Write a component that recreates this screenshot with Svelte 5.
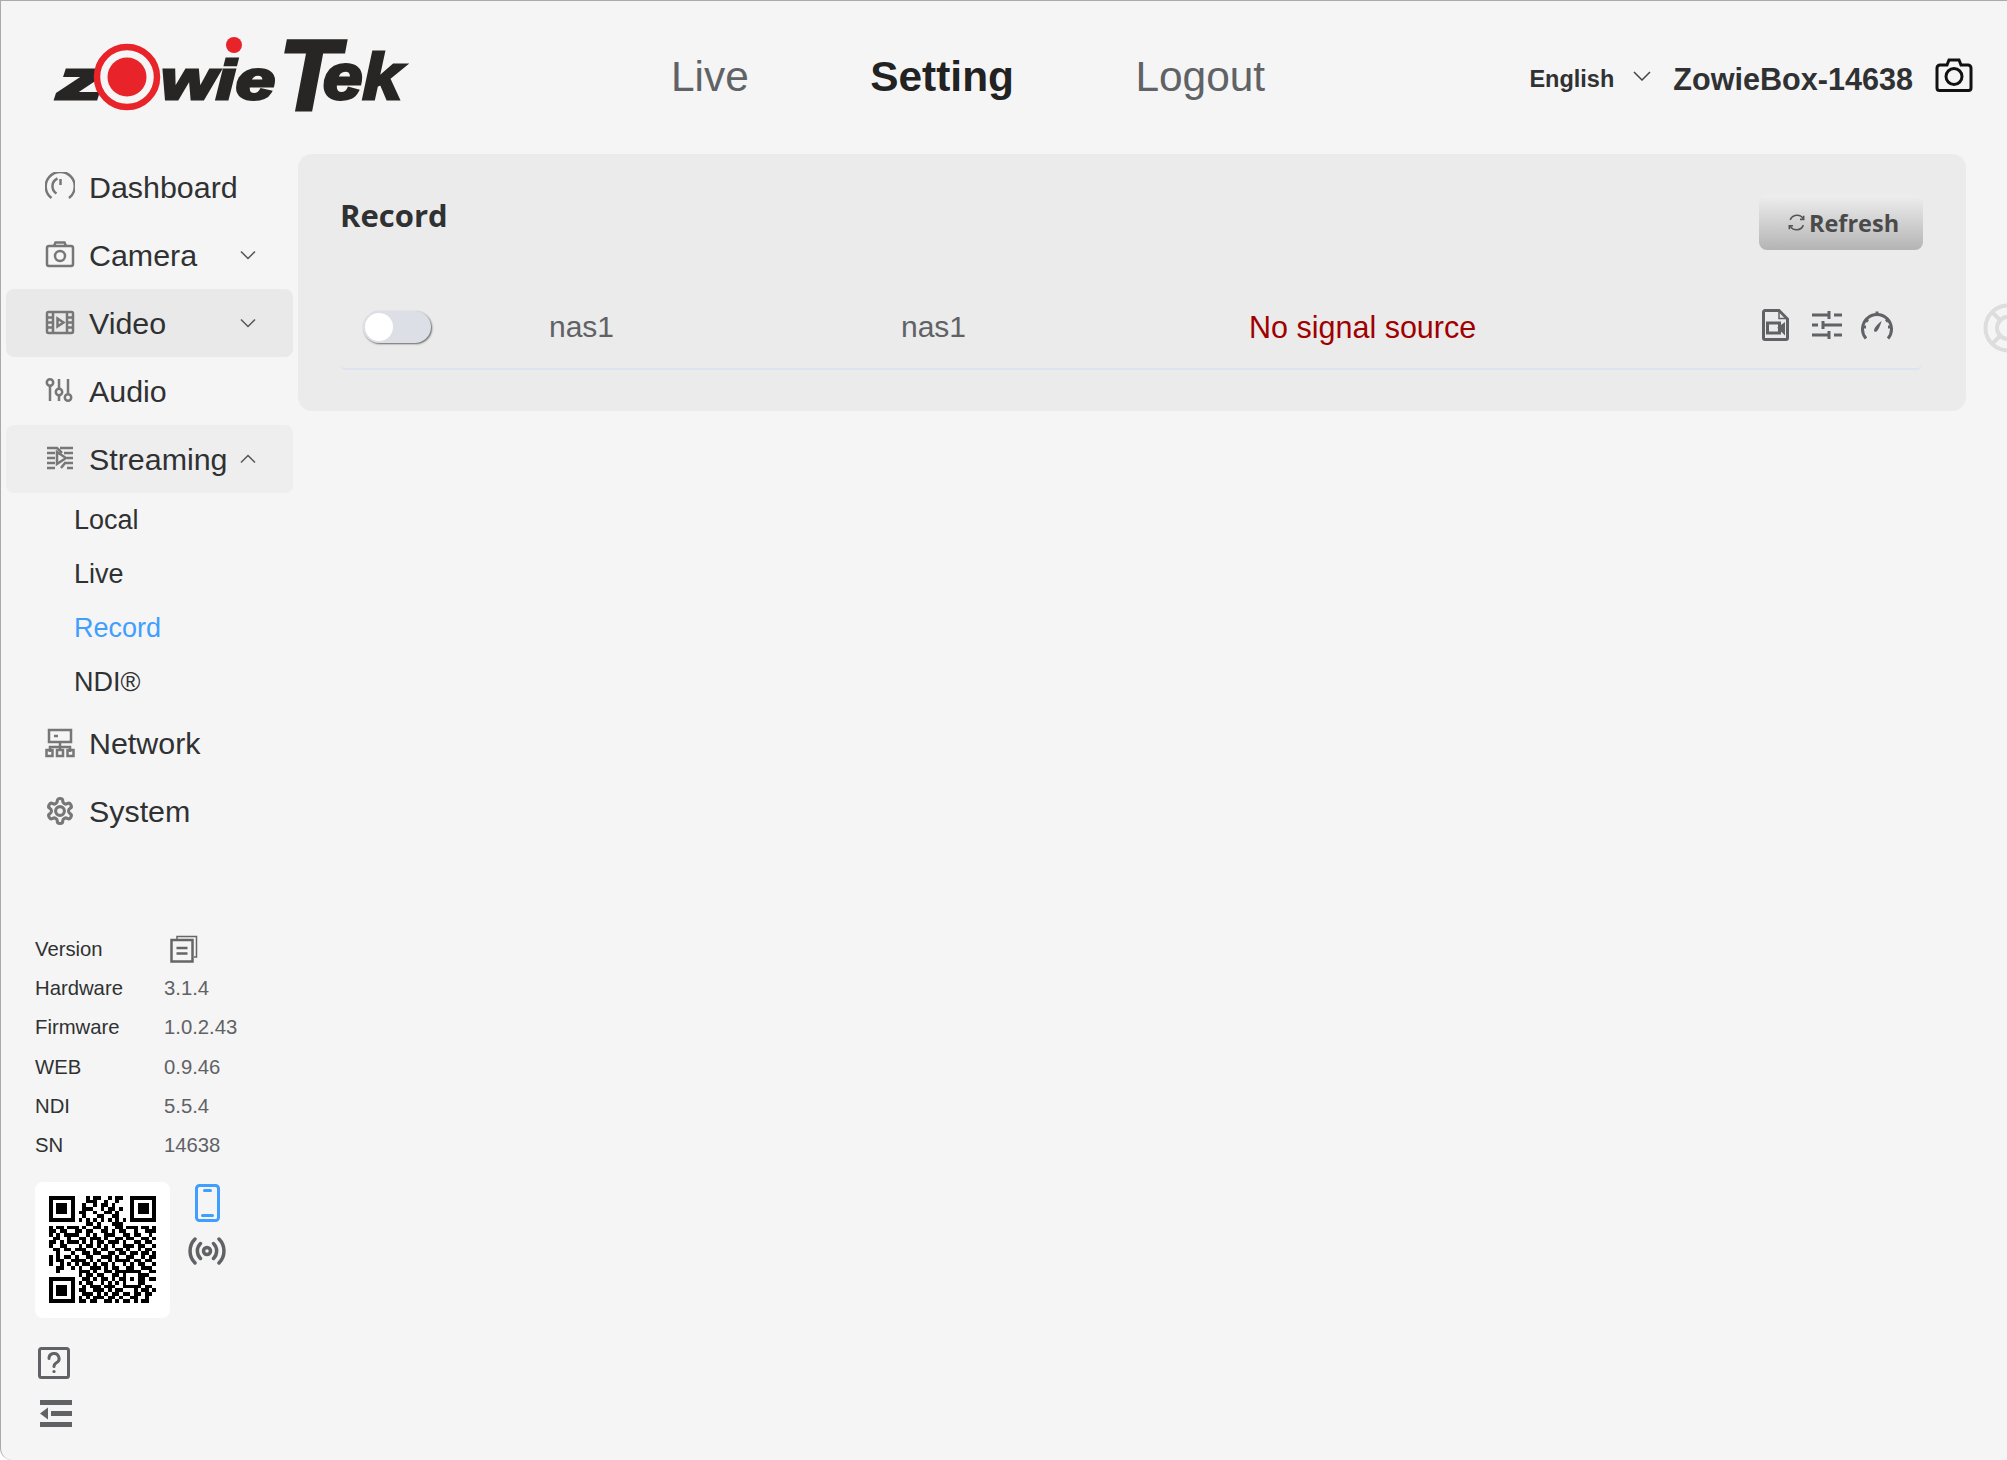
<script>
  const icons = {
    dashboard: '<path d="M6.500 26A14.500 14.500 0 1 1 24 26"/><path d="M11.500 21.500A8.500 8.500 0 0 1 12.500 6.500"/><path d="M15.500 7v6"/>',
    camera: '<rect x="2" y="6" width="26" height="20" rx="2"/><path d="M9 6l1.500-3.500h9L21 6"/><circle cx="15" cy="16" r="5"/>',
    video: '<rect x="2" y="4" width="26" height="21" rx="1.500"/><path d="M8 4v21M22 4v21M2 9.500h6M2 14.500h6M2 19.500h6M22 9.500h6M22 14.500h6M22 19.500h6"/><path d="M12.500 10.500v8l6-4z"/>',
    audio: '<path d="M5 10v15M14 3v9M14 20v5M23 3v14"/><circle cx="5" cy="6.500" r="3.200"/><circle cx="14" cy="16" r="3.200"/><circle cx="23" cy="21.500" r="3.200"/>',
    streaming: '<path d="M2 4h10l5 5M15 4h13M2 9h8M19 9h9M2 14h8M22 14h6M2 19h8M19 19h9M2 24h8M16 24l4-5M22 24h6"/><path d="M12 8v12l9-6z"/>',
    network: '<rect x="4" y="2" width="22" height="12"/><path d="M9 8h4M15 14v5M5 24v-5h20v5M15 19v3"/><rect x="1.500" y="22" width="6" height="6"/><rect x="12" y="22" width="6" height="6"/><rect x="22.500" y="22" width="6" height="6"/>',
    system: '<g transform="scale(1.25)"><path d="M12.220 2h-.44a2 2 0 0 0-2 2v.18a2 2 0 0 1-1 1.730l-.43.25a2 2 0 0 1-2 0l-.15-.08a2 2 0 0 0-2.730.73l-.22.38a2 2 0 0 0 .73 2.730l.15.1a2 2 0 0 1 1 1.720v.51a2 2 0 0 1-1 1.740l-.15.09a2 2 0 0 0-.73 2.730l.22.38a2 2 0 0 0 2.730.73l.15-.08a2 2 0 0 1 2 0l.43.25a2 2 0 0 1 1 1.730V20a2 2 0 0 0 2 2h.44a2 2 0 0 0 2-2v-.18a2 2 0 0 1 1-1.730l.43-.25a2 2 0 0 1 2 0l.15.08a2 2 0 0 0 2.730-.73l.22-.39a2 2 0 0 0-.73-2.730l-.15-.08a2 2 0 0 1-1-1.740v-.5a2 2 0 0 1 1-1.740l.15-.09a2 2 0 0 0 .73-2.730l-.22-.38a2 2 0 0 0-2.730-.73l-.15.08a2 2 0 0 1-2 0l-.43-.25a2 2 0 0 1-1-1.730V4a2 2 0 0 0-2-2z"/><circle cx="12" cy="12" r="3.500"/></g>'
  };

  const menu = [
    { name: 'Dashboard', icon: 'dashboard' },
    { name: 'Camera', icon: 'camera', caret: 'down' },
    { name: 'Video', icon: 'video', caret: 'down', cls: 'hover' },
    { name: 'Audio', icon: 'audio' },
    { name: 'Streaming', icon: 'streaming', caret: 'up', cls: 'open', children: ['Local', 'Live', 'Record', 'NDI®'] },
    { name: 'Network', icon: 'network' },
    { name: 'System', icon: 'system' }
  ];

  const versions = [
    ['Hardware', '3.1.4'],
    ['Firmware', '1.0.2.43'],
    ['WEB', '0.9.46'],
    ['NDI', '5.5.4'],
    ['SN', '14638']
  ];

  // read off the screenshot, module by module
  const qr = [
    '11111110001011001011001111111',
    '10000010001110010010001000001',
    '10111010010010110100001011101',
    '10111010011100101101001011101',
    '10111010110010011010001011101',
    '10000010010001100110001000001',
    '11111110101010101010101111111',
    '00000000001101000111000000000',
    '10110111010011010011011101101',
    '11011001101100110101100100111',
    '10101111001010011100110110010',
    '01100100110111010011011001101',
    '11010111010101101110100110110',
    '10011000101101010100111011001',
    '01101101110010110011010010110',
    '00100010011011001101101101101',
    '10101101001100111010011001011',
    '10110011110101001011110110110',
    '10010101011010110100101011001',
    '00110010100111010110011001110',
    '00100000111010011011111110011',
    '00000000101101100110100011100',
    '11111110011010110101101011011',
    '10000010101100101010100011000',
    '10111010010111011100111110110',
    '10111010110011101011000101101',
    '10111010011101010110110110110',
    '10000010101011101101001100100',
    '11111110110110011010110101100'
  ];
</script>

{#snippet caret(dir)}
  <svg class="caret" viewBox="0 0 16 10"><path d={dir === 'up' ? 'M1 8.500l7-7 7 7' : 'M1 1.500l7 7 7-7'} /></svg>
{/snippet}

<div class="app">
  <header class="top">
    <div class="logo">
      <svg viewBox="0 0 380 90" width="380" height="90">
        <g class="logo-text">
          <text x="4" y="62" font-size="56" textLength="46" lengthAdjust="spacingAndGlyphs">z</text>
          <text x="108" y="62" font-size="56" textLength="114" lengthAdjust="spacingAndGlyphs">wie</text>
          <text x="226" y="73" font-size="100" textLength="60" lengthAdjust="spacingAndGlyphs">T</text>
          <text x="270" y="62" font-size="64" textLength="79" lengthAdjust="spacingAndGlyphs">ek</text>
        </g>
        <circle cx="74" cy="40" r="30" fill="#f5f5f5" stroke="#e8232a" stroke-width="6.500" />
        <circle cx="74" cy="40" r="19.500" fill="#e8232a" />
        <circle cx="181" cy="8" r="8" fill="#e8232a" />
      </svg>
    </div>
    <nav class="nav">
      <span>Live</span>
      <span class="active">Setting</span>
      <span>Logout</span>
    </nav>
    <div class="device">
      <span class="lang">English</span>
      <svg class="lang-caret" viewBox="0 0 18 10"><path d="M1 1l8 8 8-8" /></svg>
      <span class="box-name">ZowieBox-14638</span>
      <svg class="snap" viewBox="0 0 38 34">
        <path d="M5 7h7l2-5h10l2 5h7a3 3 0 0 1 3 3v20a2.500 2.500 0 0 1-2.500 2.500h-29A2.500 2.500 0 0 1 2 30V10a3 3 0 0 1 3-3z" />
        <circle cx="19" cy="18.500" r="8" />
      </svg>
    </div>
  </header>

  <div class="body">
    <aside class="side">
      <ul class="menu">
        {#each menu as item}
          <li class="item {item.cls ?? ''}">
            <svg class="ico" viewBox="0 0 30 30">{@html icons[item.icon]}</svg>
            <span class="label">{item.name}</span>
            {#if item.caret}{@render caret(item.caret)}{/if}
          </li>
          {#if item.children}
            {#each item.children as child}
              <li class="sub" class:current={child === 'Record'}>{child}</li>
            {/each}
          {/if}
        {/each}
      </ul>

      <div class="versions">
        <div class="vrow first">
          <span class="vkey">Version</span>
          <svg class="copy" viewBox="0 0 28 28">
            <path d="M7 4V1.500h19.500V22H24" class="thin" />
            <rect x="1.500" y="5" width="21" height="21.500" />
            <path d="M6.500 13h11M6.500 18.500h11" />
          </svg>
        </div>
        {#each versions as [k, v]}
          <div class="vrow"><span class="vkey">{k}</span><span class="vval">{v}</span></div>
        {/each}
      </div>

      <div class="share">
        <div class="qr">
          <svg viewBox="0 0 29 29" width="107" height="107" shape-rendering="crispEdges">
            {#each qr as row, y}
              {#each row as cell, x}
                {#if cell === '1'}<rect {x} {y} width="1" height="1" fill="#000" />{/if}
              {/each}
            {/each}
          </svg>
        </div>
        <div class="share-btns">
          <svg class="phone" viewBox="0 0 25 38">
            <rect x="1.500" y="1.500" width="22" height="35" rx="3" />
            <path d="M9.500 6.500h6M7.500 31.500h10" />
          </svg>
          <svg class="cast" viewBox="0 0 38 28">
            <circle cx="19" cy="14" r="3.500" />
            <path d="M12.500 6.500a10.500 10.500 0 0 0 0 15M25.500 6.500a10.500 10.500 0 0 1 0 15M7 2a17 17 0 0 0 0 24M31 2a17 17 0 0 1 0 24" />
          </svg>
        </div>
      </div>

      <svg class="help" viewBox="0 0 32 32">
        <rect x="1.500" y="1.500" width="29" height="29" rx="2" />
        <path d="M11 11.500a5 5 0 1 1 7.500 4.300c-1.700 1-2.500 1.700-2.500 3.700" />
        <circle class="dot" cx="16" cy="24.500" r="1.600" />
      </svg>
      <svg class="fold" viewBox="0 0 32 27">
        <rect y="0" width="32" height="5" />
        <rect x="11" y="11" width="21" height="5" />
        <path d="M0 13.500l8-6v12z" />
        <rect y="22" width="32" height="5" />
      </svg>
    </aside>

    <main class="main">
      <section class="panel">
        <div class="panel-head">
          <h2>Record</h2>
          <button class="refresh">
            <svg viewBox="0 0 18 18"><path d="M3 6.500A7 7 0 0 1 15.500 5.500M15.500 11.500A7 7 0 0 1 3 12.500" /><path d="M15.800 2.500v3.500h-3.500M2.200 15.500V12h3.500" /></svg>
            Refresh
          </button>
        </div>
        <div class="rec-row">
          <span class="switch"><span class="knob"></span></span>
          <span class="cell w1">nas1</span>
          <span class="cell w2">nas1</span>
          <span class="status">No signal source</span>
          <div class="actions">
            <svg class="file" viewBox="0 0 27 32">
              <path d="M3 1.500h14l8.500 8.500v19a1.500 1.500 0 0 1-1.500 1.500H3A1.500 1.500 0 0 1 1.500 29V3A1.500 1.500 0 0 1 3 1.500z" />
              <path d="M17 2v7.500h8" class="thin" />
              <rect x="5.500" y="14" width="12" height="10" />
              <path d="M17.500 19l4-3v7z" />
            </svg>
            <svg class="sliders" viewBox="0 0 30 28">
              <path d="M0 4h17M17 0v8M22 4h8M0 14h6M11 14h19M11 10v8M0 24h17M17 20v8M22 24h8" />
            </svg>
            <svg class="gauge" viewBox="0 0 32 30">
              <path d="M5 28.500a14.500 14.500 0 1 1 22 0" />
              <path d="M16 1.500v4M4 9l3 2.500M28 9l-3 2.500M1.500 17h3.500M27 17h3.500" />
              <path class="solid" d="M13 20.500c0-2.500 4-7 7.500-9.500-.8 4-3 8.700-5 10.500-1.300.8-2.500 0-2.500-1z" />
            </svg>
          </div>
        </div>
      </section>
    </main>
  </div>

  <svg class="buoy" viewBox="0 0 50 50">
    <circle cx="25" cy="25" r="22.500" />
    <circle cx="25" cy="25" r="11" />
    <path d="M9 9l8 8M9 41l8-8" />
  </svg>
</div>

<style>
  :global(body) {
    background: #fff;
  }
  .app {
    position: relative;
    box-sizing: border-box;
    width: 2007px;
    height: 1460px;
    overflow: hidden;
    background: #f5f5f5;
    border-top: 1px solid #aaa;
    border-left: 1px solid #aaa;
    border-bottom-left-radius: 12px;
    font-family: "Liberation Sans", Arial, sans-serif;
    color: #303133;
  }

  .top {
    display: flex;
    align-items: center;
    height: 152px;
  }
  .logo {
    width: 670px;
    padding: 10px 0 0 52px;
    box-sizing: border-box;
    flex: none;
  }
  .logo svg {
    display: block;
    overflow: visible;
  }
  .logo-text {
    font-family: "Liberation Sans", Arial, sans-serif;
    font-weight: 700;
    font-style: italic;
    fill: #272625;
    stroke: #272625;
    stroke-width: 3px;
  }
  .nav {
    display: flex;
    gap: 121.500px;
    font-size: 42.400px;
    color: #606266;
    margin-right: auto;
    padding-bottom: 1px;
  }
  .nav .active {
    font-weight: 700;
    color: #222;
  }
  .device {
    display: flex;
    align-items: center;
    padding-right: 34px;
    padding-top: 4px;
    font-weight: 700;
  }
  .lang {
    font-size: 23.500px;
  }
  .lang-caret {
    width: 18px;
    height: 10px;
    margin: 0 22px 6px 19px;
    fill: none;
    stroke: #444;
    stroke-width: 1.500;
  }
  .box-name {
    font-size: 30.600px;
  }
  .snap {
    width: 38px;
    height: 36px;
    margin: -5px 0 3px 22px;
    fill: none;
    stroke: #111;
    stroke-width: 3;
  }

  .body {
    display: flex;
    align-items: flex-start;
  }
  .side {
    width: 297px;
    flex: none;
  }
  .menu {
    list-style: none;
    margin: 0;
    padding: 0 5px 0 5px;
  }
  .item {
    display: flex;
    align-items: center;
    height: 68px;
    padding-left: 39px;
    border-radius: 8px;
    font-size: 30.400px;
  }
  .item.hover {
    background: #e9e9e9;
  }
  .item.open {
    background: #eee;
  }
  .ico {
    width: 30px;
    height: 30px;
    flex: none;
    fill: none;
    stroke: #777;
    stroke-width: 2.500;
  }
  .label {
    margin-left: 14px;
    flex: 1;
  }
  .caret {
    width: 16px;
    height: 10px;
    margin-right: 37px;
    fill: none;
    stroke: #555;
    stroke-width: 1.500;
  }
  .sub {
    height: 54px;
    line-height: 54px;
    padding-left: 68px;
    font-size: 27px;
  }
  .sub.current {
    color: #409eff;
  }

  .versions {
    padding: 84px 0 0 34px;
  }
  .vrow {
    display: flex;
    align-items: center;
    height: 39.100px;
    font-size: 20.300px;
  }
  .vrow.first {
    height: 40.300px;
  }
  .vkey {
    width: 129px;
  }
  .vval {
    color: #606266;
  }
  .copy {
    width: 28px;
    height: 28px;
    margin-left: 6px;
    fill: none;
    stroke: #666;
    stroke-width: 2.500;
  }
  .copy .thin {
    stroke-width: 1.500;
  }

  .share {
    display: flex;
    margin: 17px 0 0 34px;
  }
  .qr {
    display: flex;
    align-items: center;
    justify-content: center;
    width: 135px;
    height: 136px;
    background: #fff;
    border-radius: 8px;
  }
  .share-btns {
    display: flex;
    flex-direction: column;
    align-items: center;
    gap: 15px;
    width: 38px;
    margin: 2px 0 0 18px;
  }
  .phone {
    width: 25px;
    height: 38px;
    fill: none;
    stroke: #409eff;
    stroke-width: 3;
    stroke-linecap: round;
  }
  .cast {
    width: 38px;
    height: 28px;
    fill: none;
    stroke: #606266;
    stroke-width: 3.500;
    stroke-linecap: round;
  }
  .help {
    display: block;
    width: 32px;
    height: 32px;
    margin: 29px 0 0 37px;
    fill: none;
    stroke: #606266;
    stroke-width: 3;
    stroke-linecap: round;
  }
  .help .dot {
    fill: #606266;
    stroke: none;
  }
  .fold {
    display: block;
    width: 32px;
    height: 27px;
    margin: 21px 0 0 39px;
    fill: #606266;
  }

  .main {
    flex: 1;
    padding: 1px 41px 0 0;
    min-width: 0;
  }
  .panel {
    height: 257px;
    box-sizing: border-box;
    padding: 42px 43px 0 42px;
    background: #ebebeb;
    border-radius: 14px;
  }
  .panel-head {
    display: flex;
    justify-content: space-between;
    align-items: flex-start;
    height: 54px;
  }
  h2 {
    margin: -3px 0 0;
    font-family: "Open Sans", sans-serif;
    font-size: 31px;
    font-weight: 700;
    line-height: 44px;
    color: #303133;
  }
  .refresh {
    display: flex;
    align-items: center;
    justify-content: center;
    gap: 3px;
    width: 164px;
    height: 55px;
    margin-top: -1px;
    padding: 0 0 0 4px;
    border: 0;
    border-radius: 8px;
    background: linear-gradient(#eee, #b4b4b4);
    font-family: "Open Sans", sans-serif;
    font-size: 23.500px;
    font-weight: 700;
    color: #4a4a4a;
  }
  .refresh svg {
    width: 19px;
    height: 19px;
    fill: none;
    stroke: #555;
    stroke-width: 1.500;
  }
  .rec-row {
    display: flex;
    align-items: center;
    box-sizing: border-box;
    height: 120px;
    margin-right: 1px;
    padding: 36px 29px 0 23px;
    border-bottom: 2px solid #dfe3f0;
    border-radius: 0 0 6px 6px;
    font-size: 30px;
    color: #606266;
  }
  .switch {
    position: relative;
    box-sizing: border-box;
    flex: none;
    width: 68px;
    height: 32px;
    margin-right: 118px;
    border-radius: 16px;
    background: #dcdfe6;
    box-shadow: 1px 1px 2px #666;
  }
  .knob {
    position: absolute;
    left: 2px;
    top: 2px;
    width: 28px;
    height: 28px;
    border-radius: 50%;
    background: #fff;
  }
  .cell {
    flex: none;
  }
  .w1 {
    width: 352px;
  }
  .w2 {
    width: 348px;
  }
  .status {
    flex: 1;
    font-size: 30.500px;
    color: #a00000;
  }
  .actions {
    display: flex;
    align-items: center;
    gap: 23px;
    margin-top: -5px;
  }
  .actions svg {
    fill: none;
    stroke: #606266;
    stroke-width: 3;
    flex: none;
  }
  .file {
    width: 27px;
    height: 32px;
  }
  .file .thin {
    stroke-width: 1.500;
  }
  .sliders {
    width: 30px;
    height: 28px;
  }
  .gauge {
    width: 32px;
    height: 30px;
    margin-left: -4px;
  }
  .gauge .solid {
    fill: #606266;
    stroke: none;
  }

  /* floating helper, cut off by the window edge */
  .buoy {
    position: absolute;
    top: 302px;
    right: -26px;
    width: 50px;
    height: 50px;
    fill: none;
    stroke: #ddd;
    stroke-width: 4;
  }
</style>
